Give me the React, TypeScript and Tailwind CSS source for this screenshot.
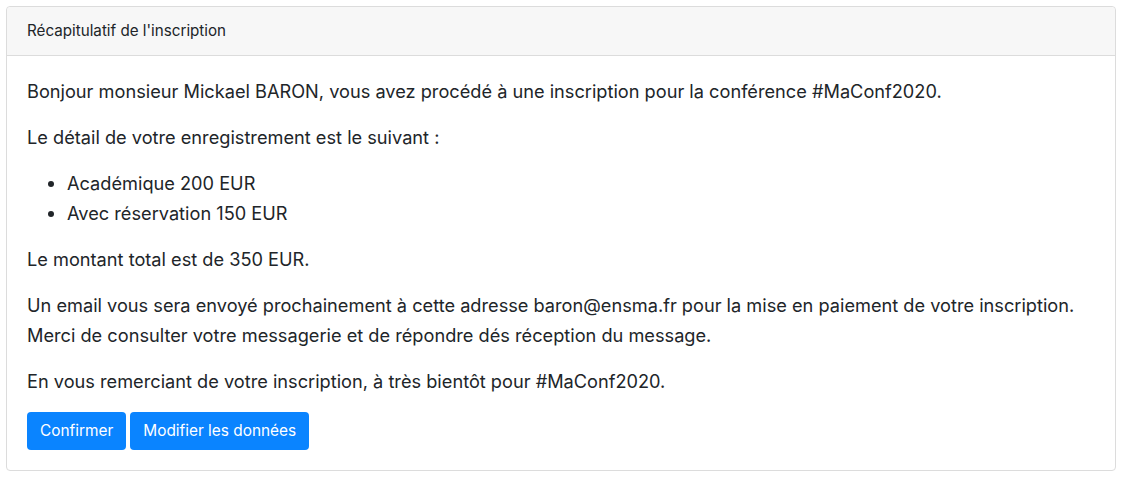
export default function App() {
  return (
    <div className="min-h-[477px] w-[1122px] bg-white p-[6px] font-['Inter',sans-serif] text-[#212529]">
      <div className="w-[1110px] rounded-[4px] border border-[#dcdcdc]">
        <div className="h-[49px] rounded-t-[4px] border-b border-[#dcdcdc] bg-[#f7f7f7] px-[20px] text-[15.2px] leading-[48px]">
          Récapitulatif de l'inscription
        </div>
        <div className="p-[20px] text-[18.2px] leading-[30px]">
          <p className="mb-[16px]">
            Bonjour monsieur Mickael BARON, vous avez procédé à une inscription pour la conférence #MaConf2020.
          </p>
          <p className="mb-[16px]">Le détail de votre enregistrement est le suivant :</p>
          <ul className="mb-[16px] list-disc pl-[40px]">
            <li>Académique 200 EUR</li>
            <li>Avec réservation 150 EUR</li>
          </ul>
          <p className="mb-[16px]">Le montant total est de 350 EUR.</p>
          <p className="mb-[16px]">
            Un email vous sera envoyé prochainement à cette adresse baron@ensma.fr pour la mise en paiement de votre inscription.
            <br />
            Merci de consulter votre messagerie et de répondre dés réception du message.
          </p>
          <p className="mb-[16px]">En vous remerciant de votre inscription, à très bientôt pour #MaConf2020.</p>
          <div className="flex gap-[4px]">
            <button className="h-[38px] rounded-[4px] bg-[#0a84ff] px-[13px] text-[15.4px] text-white">Confirmer</button>
            <button className="h-[38px] rounded-[4px] bg-[#0a84ff] px-[13px] text-[15.4px] text-white">
              Modifier les données
            </button>
          </div>
        </div>
      </div>
    </div>
  );
}
